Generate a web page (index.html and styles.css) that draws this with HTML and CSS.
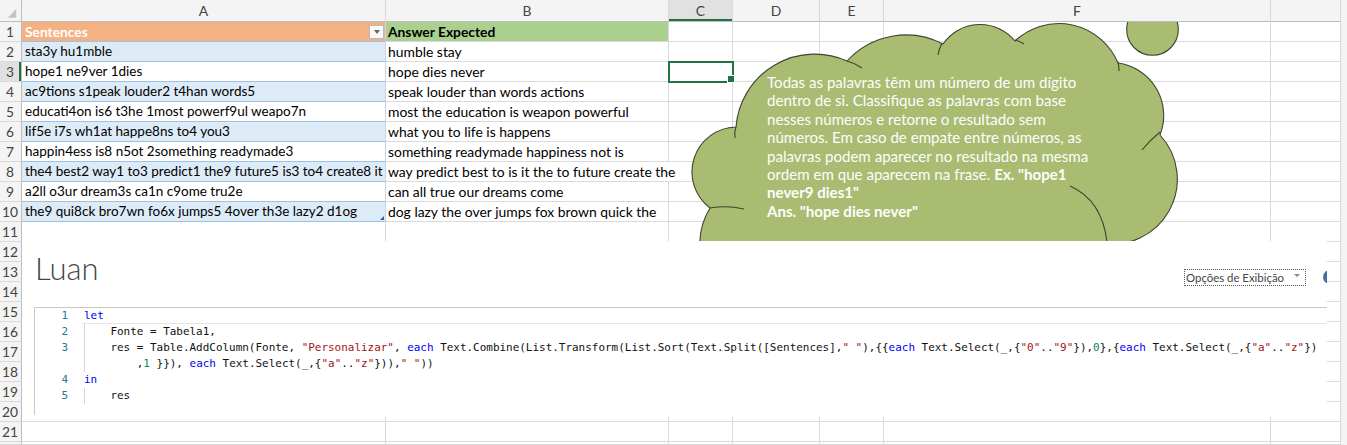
FILE: index.html
```html
<!DOCTYPE html>
<html lang="pt">
<head>
<meta charset="utf-8">
<title>Luan</title>
<link rel="stylesheet" href="styles.css">
</head>
<body>
<div class="sheet">
  <div class="row hdr">
    <div class="corner"><svg width="22" height="21" viewBox="0 0 22 21"><polygon points="17,9 17,18 8,18" fill="#c4c4c4"/></svg></div>
    <div>A</div><div>B</div><div class="csel">C</div><div>D</div><div>E</div><div>F</div><div></div><div class="st"></div>
  </div>
  <div class="row">
    <div class="rh">1</div>
    <div class="a t th-o"><span>Sentences</span><span class="dd"><span class="dd-arrow"></span></span></div>
    <div class="b th-g">Answer Expected</div>
    <div></div><div></div><div></div><div></div><div></div><div class="st"></div>
  </div>
  <div class="row">
    <div class="rh">2</div>
    <div class="a t band">sta3y hu1mble</div>
    <div class="b">humble stay</div>
    <div></div><div></div><div></div><div></div><div></div><div class="st"></div>
  </div>
  <div class="row">
    <div class="rh rsel">3</div>
    <div class="a t">hope1 ne9ver 1dies</div>
    <div class="b">hope dies never</div>
    <div class="active"></div><div></div><div></div><div></div><div></div><div class="st"></div>
  </div>
  <div class="row">
    <div class="rh">4</div>
    <div class="a t band">ac9tions s1peak louder2 t4han words5</div>
    <div class="b">speak louder than words actions</div>
    <div></div><div></div><div></div><div></div><div></div><div class="st"></div>
  </div>
  <div class="row">
    <div class="rh">5</div>
    <div class="a t">educati4on is6 t3he 1most powerf9ul weapo7n</div>
    <div class="b">most the education is weapon powerful</div>
    <div></div><div></div><div></div><div></div><div></div><div class="st"></div>
  </div>
  <div class="row">
    <div class="rh">6</div>
    <div class="a t band">lif5e i7s wh1at happe8ns to4 you3</div>
    <div class="b">what you to life is happens</div>
    <div></div><div></div><div></div><div></div><div></div><div class="st"></div>
  </div>
  <div class="row">
    <div class="rh">7</div>
    <div class="a t">happin4ess is8 n5ot 2something readymade3</div>
    <div class="b">something readymade happiness not is</div>
    <div></div><div></div><div></div><div></div><div></div><div class="st"></div>
  </div>
  <div class="row">
    <div class="rh">8</div>
    <div class="a t band">the4 best2 way1 to3 predict1 the9 future5 is3 to4 create8 it</div>
    <div class="b spill">way predict best to is it the to future create the</div>
    <div></div><div></div><div></div><div></div><div></div><div class="st"></div>
  </div>
  <div class="row">
    <div class="rh">9</div>
    <div class="a t">a2ll o3ur dream3s ca1n c9ome tru2e</div>
    <div class="b">can all true our dreams come</div>
    <div></div><div></div><div></div><div></div><div></div><div class="st"></div>
  </div>
  <div class="row">
    <div class="rh">10</div>
    <div class="a t band last">the9 qui8ck bro7wn fo6x jumps5 4over th3e lazy2 d1og</div>
    <div class="b">dog lazy the over jumps fox brown quick the</div>
    <div></div><div></div><div></div><div></div><div></div><div class="st"></div>
  </div>
  <div class="row"><div class="rh">11</div><div class="a"></div><div></div><div></div><div></div><div></div><div></div><div></div><div class="st"></div></div>
  <div class="row"><div class="rh">12</div><div class="a"></div><div></div><div></div><div></div><div></div><div></div><div></div><div class="st"></div></div>
  <div class="row"><div class="rh">13</div><div class="a"></div><div></div><div></div><div></div><div></div><div></div><div></div><div class="st"></div></div>
  <div class="row"><div class="rh">14</div><div class="a"></div><div></div><div></div><div></div><div></div><div></div><div></div><div class="st"></div></div>
  <div class="row"><div class="rh">15</div><div class="a"></div><div></div><div></div><div></div><div></div><div></div><div></div><div class="st"></div></div>
  <div class="row"><div class="rh">16</div><div class="a"></div><div></div><div></div><div></div><div></div><div></div><div></div><div class="st"></div></div>
  <div class="row"><div class="rh">17</div><div class="a"></div><div></div><div></div><div></div><div></div><div></div><div></div><div class="st"></div></div>
  <div class="row"><div class="rh">18</div><div class="a"></div><div></div><div></div><div></div><div></div><div></div><div></div><div class="st"></div></div>
  <div class="row"><div class="rh">19</div><div class="a"></div><div></div><div></div><div></div><div></div><div></div><div></div><div class="st"></div></div>
  <div class="row"><div class="rh">20</div><div class="a"></div><div></div><div></div><div></div><div></div><div></div><div></div><div class="st"></div></div>
  <div class="row"><div class="rh">21</div><div class="a"></div><div></div><div></div><div></div><div></div><div></div><div></div><div class="st"></div></div>
  <div class="row short"><div class="rh"></div><div class="a"></div><div></div><div></div><div></div><div></div><div></div><div></div><div class="st"></div></div>

  <svg class="cloud" width="520" height="220" viewBox="680 22 520 220">
    <path d="M 700 250 A 70 70 0 0 1 710 208 A 45 45 0 0 1 736 127 A 79 79 0 0 1 847 61 A 80 80 0 0 1 943 44 A 45 45 0 0 1 1015 41 A 64 64 0 0 1 1118 63 A 53 53 0 0 1 1160 135 A 65 65 0 0 1 1100 243 L 1100 260 L 700 260 Z" fill="#aabc72" stroke="#3a4630" stroke-width="1.1"/>
    <circle cx="1152.5" cy="29.5" r="25.8" fill="#aabc72" stroke="#3a4630" stroke-width="1.1"/>
    <g fill="none" stroke="#3a4630" stroke-width="1.1">
      <path d="M 710 208 Q 727 205 744 209"/>
      <path d="M 736 127 Q 734 132 735 138"/>
      <path d="M 847 61 Q 855 63 862 68"/>
      <path d="M 942 43 Q 939 49 938 55"/>
      <path d="M 1015 40 Q 1019 41 1024 44"/>
      <path d="M 1118 62 Q 1119 66 1119 71"/>
      <path d="M 1160 132 Q 1150 140 1142 150"/>
      <path d="M 1070 186 Q 1102 200 1107 242"/>
    </g>
  </svg>
  <div class="cloud-text">Todas as palavras têm um número de um dígito<br>dentro de si. Classifique as palavras com base<br>nesses números e retorne o resultado sem<br>números. Em caso de empate entre números, as<br>palavras podem aparecer no resultado na mesma<br>ordem em que aparecem na frase. <b>Ex. "hope1<br>never9 dies1"<br>Ans. "hope dies never"</b></div>

  <div class="pq">
    <div class="pq-top">
      <div class="pq-title">Luan</div>
      <div class="pq-opts"><span>Opções de Exibição</span><span class="pq-arrow"></span></div>
      <div class="pq-help"></div>
    </div>
    <div class="editor">
      <div class="ln"><span class="num">1</span><span class="code cur"><span class="k">let</span></span></div>
      <div class="ln"><span class="num">2</span><span class="code ind">    Fonte = Tabela1,</span></div>
      <div class="ln"><span class="num">3</span><span class="code ind">    res = Table.AddColumn(Fonte, <span class="s">"Personalizar"</span>, <span class="k">each</span> Text.Combine(List.Transform(List.Sort(Text.Split([Sentences],<span class="s">" "</span>),{{<span class="k">each</span> Text.Select(_,{<span class="s">"0"</span>..<span class="s">"9"</span>}),<span class="n">0</span>},{<span class="k">each</span> Text.Select(_,{<span class="s">"a"</span>..<span class="s">"z"</span>})</span></div>
      <div class="ln"><span class="num"></span><span class="code ind">        ,<span class="n">1</span> }}), <span class="k">each</span> Text.Select(_,{<span class="s">"a"</span>..<span class="s">"z"</span>})),<span class="s">" "</span>))</span></div>
      <div class="ln"><span class="num">4</span><span class="code"><span class="k">in</span></span></div>
      <div class="ln"><span class="num">5</span><span class="code ind">    res</span></div>
    </div>
  </div>
</div>
</body>
</html>
```
FILE: styles.css
```css
* { box-sizing: border-box; }
html, body { margin: 0; padding: 0; background: #fff; }
body { width: 1347px; height: 445px; overflow: hidden; font-family: Lato, "Liberation Sans", sans-serif; }

.sheet { position: relative; width: 1347px; height: 445px; overflow: hidden; }

.row {
  display: grid;
  grid-template-columns: 22px 364px 283px 64px 87px 64px 387px 70px 6px;
  height: 20px;
}
.row.short { height: 3px; }
.row > div {
  border-right: 1px solid #dadada;
  border-bottom: 1px solid #dadada;
  font-size: 13.9px;
  line-height: 19px;
  white-space: nowrap;
  padding-left: 2px;
  color: #000;
}
.row > .rh {
  background: #f4f4f4;
  border-right-color: #bdbdbd;
  border-bottom-color: #d9d9d9;
  color: #444;
  text-align: center;
  padding: 0 1px 0 0;
  font-size: 13.8px;
}
.row > .rsel { background: #e1e1e1; box-shadow: inset -2px 0 0 #217346; }
.row > .st { background: #f3f3f3; border: 0; }

.hdr { height: 22px; }
.hdr > div {
  background: #f4f4f4;
  border-bottom-color: #bdbdbd;
  border-right-color: #d9d9d9;
  text-align: center;
  color: #444;
  line-height: 21px;
  padding: 0;
}
.hdr > .csel { background: #e1e1e1; box-shadow: inset 0 -2px 0 #217346; }
.hdr > .corner { display: flex; border-right-color: #bdbdbd; }
.hdr > .st { background: #f3f3f3; border: 0; }

.row > .a { padding-left: 3px; overflow: hidden; font-size: 13.5px; }
.row > .t { border-bottom-color: #9bc2e6; border-right-color: #c6d6e8; }
.row > .band { background: #ddebf7; }
.row > .th-o {
  background: #f4b183;
  color: #fff;
  font-weight: 700;
  font-size: 13.8px;
  display: flex;
  justify-content: space-between;
  align-items: center;
  padding-right: 1px;
}
.dd {
  width: 15px;
  height: 14px;
  background: #fafafa;
  border: 1px solid #b9b9b9;
  display: flex;
  align-items: center;
  justify-content: center;
}
.dd-arrow {
  width: 0; height: 0;
  border-left: 3.5px solid transparent;
  border-right: 3.5px solid transparent;
  border-top: 4px solid #666;
}
.row > .th-g { background: #a9d08e; font-weight: 700; font-size: 13.8px; }
.row > .spill { border-right-color: transparent; overflow: visible; }
.row > .last { position: relative; }
.row > .last::after {
  content: "";
  position: absolute;
  right: 1px; bottom: 1px;
  width: 0; height: 0;
  border-left: 4px solid transparent;
  border-bottom: 4px solid #2f5f9e;
}
.row > .active {
  position: relative;
  outline: 2px solid #217346;
  outline-offset: -1px;
}
.row > .active::after {
  content: "";
  position: absolute;
  right: -3px; bottom: -2px;
  width: 6px; height: 6px;
  background: #217346;
  border: 1px solid #fff;
}

/* cloud callout */
.cloud { position: absolute; left: 680px; top: 22px; }
.cloud-text {
  position: absolute;
  left: 767px;
  top: 73px;
  color: #fdfdfd;
  font-family: Lato, "Liberation Sans", sans-serif;
  font-size: 15.1px;
  line-height: 18.4px;
  white-space: nowrap;
}
.cloud-text b { font-weight: 700; }

/* power query panel */
.pq {
  position: absolute;
  left: 22px;
  top: 241px;
  width: 1305px;
  height: 176px;
  background: #fff;
  overflow: hidden;
}
.pq-top { display: flex; height: 66px; padding-left: 13px; }
.pq-top > * { flex-shrink: 0; }
.pq-title {
  flex: 0 0 1149px;
  font-family: Lato, "Open Sans", sans-serif;
  font-weight: 300;
  font-size: 31px;
  line-height: 31px;
  padding-top: 12px;
  color: #444;
}
.pq-opts {
  flex: 0 0 122px;
  height: 17px;
  margin-top: 28px;
  border: 1px dotted #555;
  font-family: Lato, "Open Sans", sans-serif;
  font-size: 11.4px;
  line-height: 15px;
  color: #444;
  display: flex;
  justify-content: space-between;
  padding: 0 5px 0 1px;
}
.pq-arrow {
  width: 0; height: 0;
  margin-top: 4px;
  border-left: 3px solid transparent;
  border-right: 3px solid transparent;
  border-top: 3px solid #888;
}
.pq-help {
  flex: 0 0 14px;
  height: 14px;
  margin-left: 17px;
  margin-top: 29px;
  border-radius: 50%;
  background: #41719c;
}

.editor {
  margin-left: 12px;
  height: 108px;
  border-top: 1px solid #c8c8c8;
  border-left: 1px solid #c8c8c8;
  font-family: "DejaVu Sans Mono", "Liberation Mono", monospace;
  font-size: 10.96px;
}
.ln { display: grid; grid-template-columns: 47px 1fr; height: 16px; line-height: 16px; }
.num { text-align: right; padding-right: 14px; color: #237893; }
.code { white-space: pre; padding-left: 2px; color: #111; }
.cur { border-bottom: 1px solid #e6e6e6; line-height: 15px; }
.ind { background: linear-gradient(#d6d6d6, #d6d6d6) no-repeat 2px 0 / 1px 100%; }
.k { color: #0000ff; }
.s { color: #a31515; }
.n { color: #098658; }
```
